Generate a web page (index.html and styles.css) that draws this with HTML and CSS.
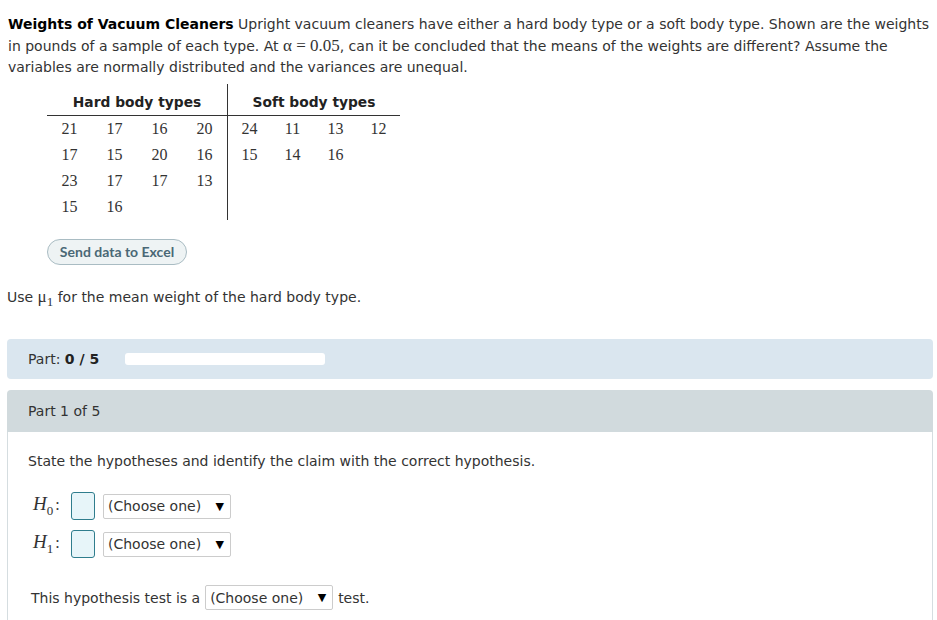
FILE: index.html
```html
<!DOCTYPE html>
<html>
<head>
<meta charset="utf-8">
<link rel="stylesheet" href="styles.css">
</head>
<body>
<div class="page">
  <p class="intro"><b>Weights of Vacuum Cleaners</b> Upright vacuum cleaners have either a hard body type or a soft body type. Shown are the weights in pounds of a sample of each type. At <span class="math">α = 0.05</span>, can it be concluded that the means of the weights are different? Assume the variables are normally distributed and the variances are unequal.</p>

  <table class="data">
    <thead>
      <tr><th colspan="4" class="hard">Hard body types</th><th colspan="4" class="soft">Soft body types</th></tr>
    </thead>
    <tbody>
      <tr><td>21</td><td>17</td><td>16</td><td class="last">20</td><td>24</td><td>11</td><td>13</td><td>12</td></tr>
      <tr><td>17</td><td>15</td><td>20</td><td class="last">16</td><td>15</td><td>14</td><td>16</td><td></td></tr>
      <tr><td>23</td><td>17</td><td>17</td><td class="last">13</td><td></td><td></td><td></td><td></td></tr>
      <tr><td>15</td><td>16</td><td></td><td class="last"></td><td></td><td></td><td></td><td></td></tr>
    </tbody>
  </table>

  <div class="excel-row"><span class="excel-btn">Send data to Excel</span></div>

  <p class="use">Use <span class="math">μ<sub>1</sub></span> for the mean weight of the hard body type.</p>

  <div class="progress">
    <span class="plabel">Part: <b>0 / 5</b></span>
    <span class="pbar"></span>
  </div>

  <div class="panel">
    <div class="panel-head">Part 1 of 5</div>
    <div class="panel-body">
      <p class="state">State the hypotheses and identify the claim with the correct hypothesis.</p>
      <div class="hyp">
        <div class="hrow"><span class="hlab"><i>H</i><sub>0</sub><span class="colon">:</span></span><span class="box"></span><span class="sel">(Choose one)<span class="arrow">▼</span></span></div>
        <div class="hrow"><span class="hlab"><i>H</i><sub>1</sub><span class="colon">:</span></span><span class="box"></span><span class="sel">(Choose one)<span class="arrow">▼</span></span></div>
      </div>
      <div class="testline">This hypothesis test is a <span class="sel">(Choose one)<span class="arrow">▼</span></span> test.</div>
    </div>
  </div>
</div>
</body>
</html>
```

FILE: styles.css
```css
html, body { margin: 0; padding: 0; background: #fff; }
body { font-family: "DejaVu Sans", Verdana, sans-serif; font-size: 14px; color: #333; }
.page { padding: 0 4px 0 7px; width: 926px; }
.intro { margin: 0; padding: 14px 0 0 1px; line-height: 21px; font-size: 14px; }
.intro b { color: #000; }
.math { font-family: "Liberation Serif", "DejaVu Serif", serif; font-size: 17px; }
table.data { border-collapse: collapse; margin: 6px 0 0 40px; font-family: "Liberation Serif", serif; font-size: 16px; color: #333; }
table.data th { font-family: "DejaVu Sans", sans-serif; font-size: 13.8px; font-weight: bold; height: 26px; padding: 0; border-bottom: 1px solid #333; color: #222; vertical-align: bottom; padding-bottom: 5px; }
table.data th.hard { border-right: 1px solid #333; }
table.data td { width: 45px; height: 26px; padding: 0; text-align: center; }
table.data td:nth-child(n+5) { width: 43px; }
table.data td.last { border-right: 1px solid #333; }
.excel-row { padding: 19px 0 0 40px; }
.excel-btn { display: inline-block; width: 138px; height: 24px; line-height: 24px; text-align: center; border: 1px solid #a9bcc3; border-radius: 13px; background: #eef3f4; color: #4a6876; font-family: Lato, sans-serif; font-weight: bold; font-size: 14px; }
.use { margin: 22px 0 0 0; padding-left: 0; line-height: 20px; }
.use .math { font-size: 17px; }
.use sub { font-size: 13px; }
.progress { margin-top: 27px; height: 40px; background: #dae6ef; border-radius: 4px; display: flex; align-items: center; padding-left: 21px; }
.plabel { width: 97px; }
.plabel b { color: #222; }
.pbar { display: inline-block; width: 200px; height: 12px; background: #fff; border-radius: 3px; }
.panel { margin-top: 11px; }
.panel-head { height: 42px; line-height: 42px; background: #d1dadd; border-radius: 4px 4px 0 0; padding-left: 21px; }
.panel-body { border-left: 1px solid #d5dde0; border-right: 1px solid #d5dde0; padding: 20px 0 10px 20px; }
.state { margin: 0; line-height: 18px; }
.hyp { margin-top: 22px; padding-left: 5px; }
.hrow { display: flex; align-items: center; height: 28px; margin-bottom: 10px; }
.hlab { font-family: "Liberation Serif", serif; font-size: 19px; width: 38px; color: #333; }
.hlab sub { font-size: 13px; font-style: normal; }
.colon { font-size: 16px; padding-left: 2px; }
.box { width: 22px; height: 26px; border: 1px solid #2f7d8d; border-radius: 3px; background: #e7f5f9; margin-right: 8px; }
.sel { display: inline-flex; align-items: center; justify-content: space-between; width: 116px; height: 23px; border: 1px solid #ccc; border-radius: 2px; padding: 0 6px 0 4px; font-size: 14px; color: #333; }
.arrow { font-size: 11px; color: #000; }
.testline { margin-top: 27px; padding-left: 3px; display: flex; align-items: center; gap: 5px; }
```
